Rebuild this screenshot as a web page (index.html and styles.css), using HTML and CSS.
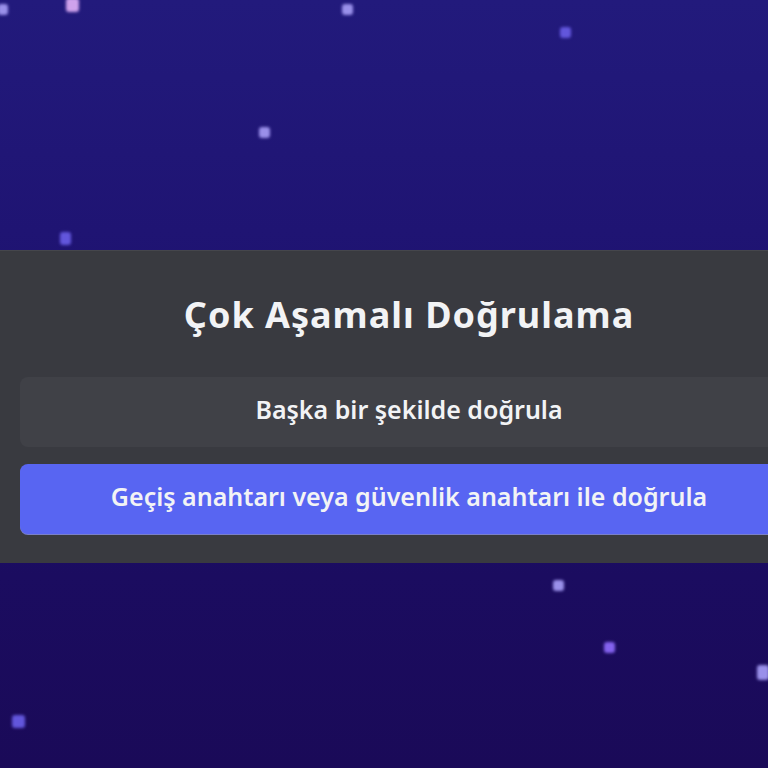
FILE: index.html
```html
<!DOCTYPE html>
<html lang="tr">
<head>
    <meta charset="UTF-8">
    <meta name="viewport" content="width=device-width, initial-scale=1.0">
    <title>Çok Aşamalı Doğrulama</title>
    <link rel="stylesheet" href="styles.css">
</head>
<body>
    <div class="stars">
        <span class="star pink" style="left:66px;top:-2px;width:13px;height:14px"></span>
        <span class="star" style="left:-2px;top:4px;width:10px;height:11px"></span>
        <span class="star" style="left:342px;top:4px;width:11px;height:11px"></span>
        <span class="star blue" style="left:560px;top:27px;width:11px;height:11px"></span>
        <span class="star" style="left:259px;top:127px;width:11px;height:11px"></span>
        <span class="star blue" style="left:60px;top:232px;width:11px;height:13px"></span>
        <span class="star" style="left:553px;top:580px;width:11px;height:11px"></span>
        <span class="star violet" style="left:604px;top:642px;width:11px;height:11px"></span>
        <span class="star" style="left:757px;top:665px;width:12px;height:15px"></span>
        <span class="star blue" style="left:12px;top:715px;width:13px;height:13px"></span>
    </div>

    <div class="panel">
        <h1>Çok Aşamalı Doğrulama</h1>
        <div class="actions">
            <button class="btn btn-secondary">Başka bir şekilde doğrula</button>
            <button class="btn btn-primary">Geçiş anahtarı veya güvenlik anahtarı ile doğrula</button>
        </div>
    </div>
</body>
</html>
```

FILE: styles.css
```css
* {
    margin: 0;
    padding: 0;
    box-sizing: border-box;
    font-family: 'Noto Sans', 'Open Sans', sans-serif;
}

html, body {
    width: 768px;
    height: 768px;
    overflow: hidden;
}

body {
    background: linear-gradient(180deg, #221a7c 0%, #1e1270 40%, #1b0c60 75%, #1a0a58 100%);
    position: relative;
    padding-top: 250px;
}

.stars {
    position: absolute;
    inset: 0;
}

.star {
    position: absolute;
    background: #9a90ea;
    border-radius: 3px;
    filter: blur(1.6px);
}

.star.pink {
    background: #cfa2ec;
}

.star.blue {
    background: #6256dc;
}

.star.violet {
    background: #8462ee;
}

.panel {
    position: relative;
    width: 818px;
    background: #393a40;
    padding: 42px 20px 29px 20px;
    border-top: 1px solid #45464c;
}

h1 {
    color: #f2f3f5;
    font-size: 36px;
    line-height: 44px;
    font-weight: 700;
    letter-spacing: 1px;
    text-align: center;
    margin-bottom: 40px;
}

.actions {
    display: flex;
    flex-direction: column;
    gap: 17px;
}

.btn {
    height: 70px;
    border: none;
    border-radius: 8px;
    color: #f2f3f5;
    font-size: 25px;
    font-weight: 600;
    padding-bottom: 6px;
    cursor: pointer;
    width: 100%;
}

.btn-secondary {
    background: #404147;
}

.btn-primary {
    background: #5865f2;
    box-shadow: 0 1px 0 #7a80c8;
}
```
